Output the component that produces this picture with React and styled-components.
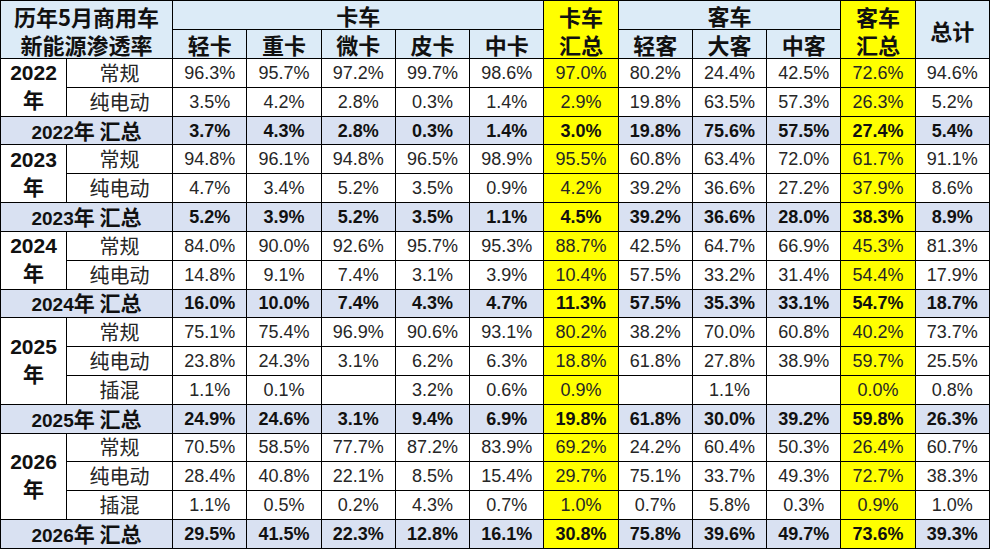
import React from 'react'
import styled, { createGlobalStyle } from 'styled-components'

const GlobalStyle = createGlobalStyle`
  html, body {
    margin: 0;
    padding: 0;
    background: #fff;
  }
  body {
    font-family: "Liberation Sans", Arial, "Noto Sans CJK SC", sans-serif;
  }
`

const HEAD_BG = '#dcebf7'
const SUM_BG = '#d9e1f2'
const YELLOW = '#ffff00'

const Table = styled.table`
  width: 990px;
  height: 549px;
  table-layout: fixed;
  border-collapse: collapse;
  font-size: 18px;
  color: #262626;
`

const Row = styled.tr`
  height: 28.8px;
  background: ${p => (p.$summary ? SUM_BG : '#fff')};
`

const HeadCell = styled.th`
  border: 1px solid #000;
  padding: 0;
  background: ${p => (p.$hl ? YELLOW : HEAD_BG)};
  color: #111;
  font-family: "Noto Sans CJK SC", sans-serif;
  font-size: 22px;
  font-weight: 700;
  line-height: 28px;
  text-align: center;
  vertical-align: middle;
`

const YearCell = styled.td`
  border: 1px solid #000;
  padding: 0;
  color: #111;
  font-weight: 700;
  font-size: 21px;
  line-height: 28px;
  text-align: center;
  vertical-align: middle;
`

const Han = styled.span`
  font-family: "Noto Sans CJK SC", sans-serif;
  font-size: 21px;
  line-height: 1;
`

const TypeCell = styled.td`
  border: 1px solid #000;
  padding: 0;
  font-family: "Noto Sans CJK SC", sans-serif;
  font-size: 20px;
  line-height: 1;
  text-align: center;
  vertical-align: middle;
`

const SumLabel = styled.td`
  border: 1px solid #000;
  padding: 0;
  color: #111;
  font-size: 19px;
  font-weight: 700;
  line-height: 1;
  text-align: center;
  vertical-align: middle;
`

const NumCell = styled.td`
  border: 1px solid #000;
  padding: 0;
  background: ${p => (p.$hl ? YELLOW : 'transparent')};
  color: ${p => (p.$bold ? '#111' : '#262626')};
  font-weight: ${p => (p.$bold ? 700 : 400)};
  line-height: 1;
  text-align: center;
  vertical-align: middle;
`

const years = [
  {
    year: '2022',
    rows: [
      ['常规', '96.3 95.7 97.2 99.7 98.6 97.0 80.2 24.4 42.5 72.6 94.6'],
      ['纯电动', '3.5 4.2 2.8 0.3 1.4 2.9 19.8 63.5 57.3 26.3 5.2'],
    ],
    total: '3.7 4.3 2.8 0.3 1.4 3.0 19.8 75.6 57.5 27.4 5.4',
  },
  {
    year: '2023',
    rows: [
      ['常规', '94.8 96.1 94.8 96.5 98.9 95.5 60.8 63.4 72.0 61.7 91.1'],
      ['纯电动', '4.7 3.4 5.2 3.5 0.9 4.2 39.2 36.6 27.2 37.9 8.6'],
    ],
    total: '5.2 3.9 5.2 3.5 1.1 4.5 39.2 36.6 28.0 38.3 8.9',
  },
  {
    year: '2024',
    rows: [
      ['常规', '84.0 90.0 92.6 95.7 95.3 88.7 42.5 64.7 66.9 45.3 81.3'],
      ['纯电动', '14.8 9.1 7.4 3.1 3.9 10.4 57.5 33.2 31.4 54.4 17.9'],
    ],
    total: '16.0 10.0 7.4 4.3 4.7 11.3 57.5 35.3 33.1 54.7 18.7',
  },
  {
    year: '2025',
    rows: [
      ['常规', '75.1 75.4 96.9 90.6 93.1 80.2 38.2 70.0 60.8 40.2 73.7'],
      ['纯电动', '23.8 24.3 3.1 6.2 6.3 18.8 61.8 27.8 38.9 59.7 25.5'],
      ['插混', '1.1 0.1 - 3.2 0.6 0.9 - 1.1 - 0.0 0.8'],
    ],
    total: '24.9 24.6 3.1 9.4 6.9 19.8 61.8 30.0 39.2 59.8 26.3',
  },
  {
    year: '2026',
    rows: [
      ['常规', '70.5 58.5 77.7 87.2 83.9 69.2 24.2 60.4 50.3 26.4 60.7'],
      ['纯电动', '28.4 40.8 22.1 8.5 15.4 29.7 75.1 33.7 49.3 72.7 38.3'],
      ['插混', '1.1 0.5 0.2 4.3 0.7 1.0 0.7 5.8 0.3 0.9 1.0'],
    ],
    total: '29.5 41.5 22.3 12.8 16.1 30.8 75.8 39.6 49.7 73.6 39.3',
  },
]

// columns 5 and 9 (卡车汇总, 客车汇总) are highlighted yellow
const isYellow = i => i === 5 || i === 9

const Values = ({ list, bold }) =>
  list.split(' ').map((v, i) => (
    <NumCell key={i} $hl={isYellow(i)} $bold={bold}>
      {v === '-' ? '' : `${v}%`}
    </NumCell>
  ))

const App = () => (
  <>
    <GlobalStyle />
    <Table>
      <colgroup>
        <col style={{ width: 66 }} />
        <col style={{ width: 106 }} />
        {Array.from({ length: 11 }).map((_, i) => (
          <col key={i} />
        ))}
      </colgroup>
      <thead>
        <Row>
          <HeadCell colSpan={2} rowSpan={2}>
            历年5月商用车
            <br />
            新能源渗透率
          </HeadCell>
          <HeadCell colSpan={5}>卡车</HeadCell>
          <HeadCell rowSpan={2} $hl>
            卡车
            <br />
            汇总
          </HeadCell>
          <HeadCell colSpan={3}>客车</HeadCell>
          <HeadCell rowSpan={2} $hl>
            客车
            <br />
            汇总
          </HeadCell>
          <HeadCell rowSpan={2}>总计</HeadCell>
        </Row>
        <Row>
          {['轻卡', '重卡', '微卡', '皮卡', '中卡', '轻客', '大客', '中客'].map(h => (
            <HeadCell key={h}>{h}</HeadCell>
          ))}
        </Row>
      </thead>
      <tbody>
        {years.map(({ year, rows, total }) => (
          <React.Fragment key={year}>
            {rows.map(([type, list], r) => (
              <Row key={type}>
                {r === 0 && (
                  <YearCell rowSpan={rows.length}>
                    {year}
                    <br />
                    <Han>年</Han>
                  </YearCell>
                )}
                <TypeCell>{type}</TypeCell>
                <Values list={list} />
              </Row>
            ))}
            <Row $summary>
              <SumLabel colSpan={2}>
                {year}
                <Han>年 汇总</Han>
              </SumLabel>
              <Values list={total} bold />
            </Row>
          </React.Fragment>
        ))}
      </tbody>
    </Table>
  </>
)

export default App
